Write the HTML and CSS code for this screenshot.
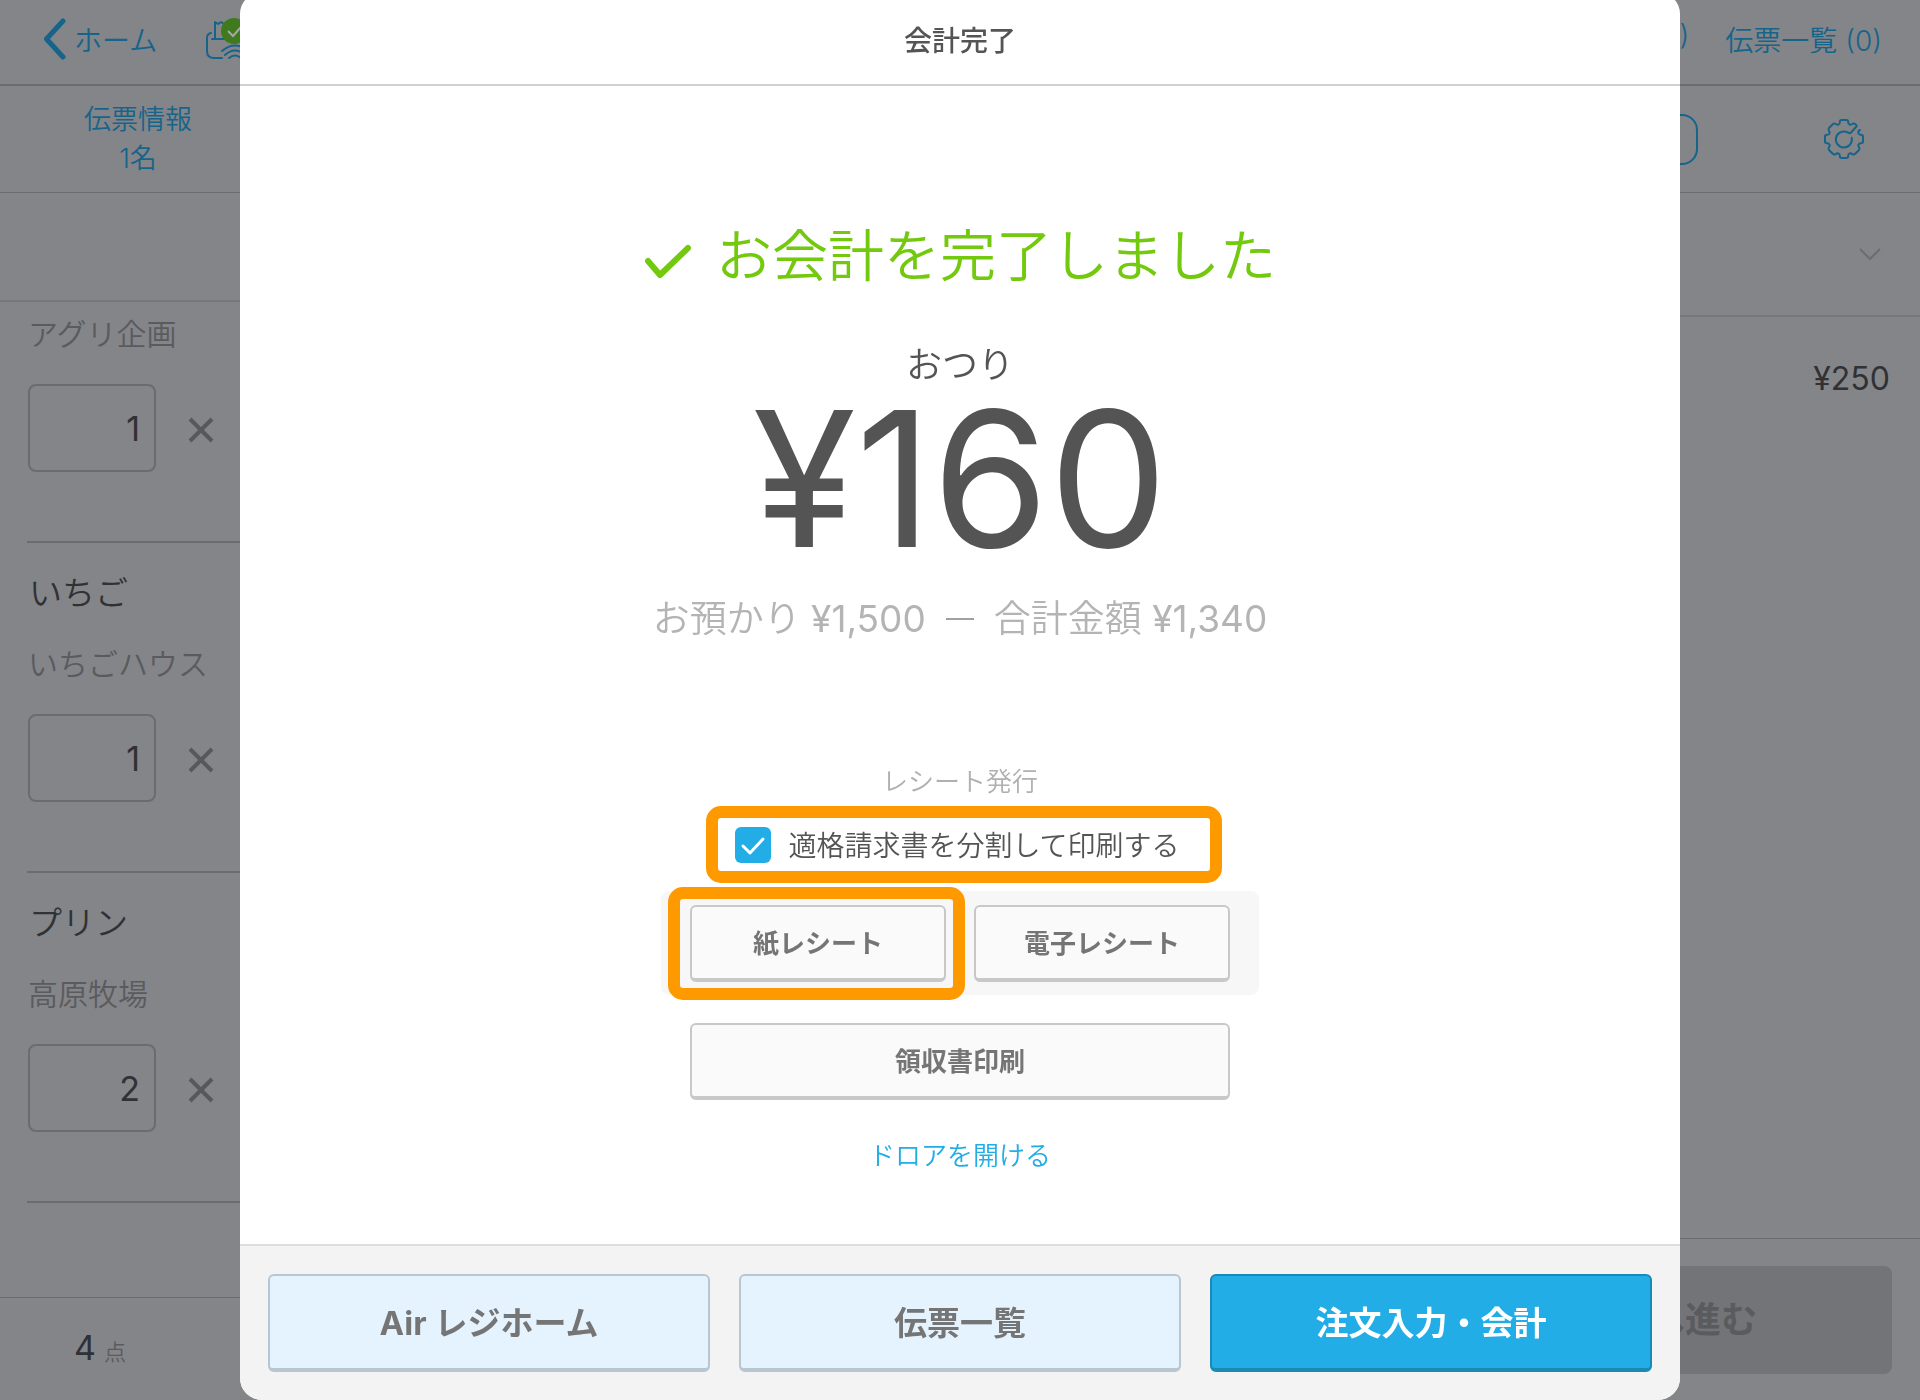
FILE: index.html
```html
<!DOCTYPE html>
<html lang="ja">
<head>
<meta charset="utf-8">
<meta name="viewport" content="width=device-width, initial-scale=1">
<title>会計完了</title>
<link rel="stylesheet" href="styles.css">
</head>
<body>
<div class="app">
  <header class="topbar">
    <a class="back" href="#">
      <svg width="24" height="42" viewBox="0 0 24 42" aria-hidden="true"><path d="M20 3 3.500 21 20 39" fill="none" stroke="currentColor" stroke-width="5" stroke-linecap="round" stroke-linejoin="round"/></svg>
      <span>ホーム</span>
    </a>
    <svg class="printer" width="56" height="44" viewBox="0 0 56 44" aria-hidden="true">
      <g fill="none" stroke="currentColor" stroke-width="2" stroke-linecap="round" stroke-linejoin="round">
        <path d="M10 22V5l3 2 3-2 3 2 3-2 3 2 3-2 3 2 3-2v17M7 22h34"/>
        <path d="M6 16Q2 17 2 21v13q0 7 7 7h8M42 16q7 1 7 6v12q0 7-5 7"/>
        <path d="M17 34q13-11 26 0M20 38q10-9 20 0M24 41q6-5 12 0"/>
      </g>
      <circle cx="29" cy="14" r="13" fill="#3f7b1e"/>
      <path d="m23 14 5 5 8-9" fill="none" stroke="#a5a8a5" stroke-width="2"/>
    </svg>
    <nav class="topbar-links">
      <a href="#">(0)</a>
      <a href="#">伝票一覧 (0)</a>
    </nav>
  </header>
  <div class="toolbar">
    <a class="slip-info" href="#"><span>伝票情報</span><span>1名</span></a>
    <div class="toolbar-actions">
      <button class="outline-button" type="button" aria-label="検索"></button>
      <button class="icon-button" type="button" aria-label="設定">
        <svg width="40" height="40" viewBox="0 0 40 40" aria-hidden="true">
          <g fill="none" stroke="currentColor" stroke-width="2" stroke-linecap="round" stroke-linejoin="round">
            <path d="M36 11Q33.500 12 34.500 14.500Q35 15.800 36.800 15.800Q39 15.800 39 17.500V22.500Q39 24.200 36.800 24.200Q35 24.200 34.500 25.500Q33.800 27 35.100 28.300Q36 30 34.800 31.200L31.200 34.800Q30 36 28.300 35.100Q27 33.800 25.500 34.500Q24.200 35 24.200 36.800Q24.200 39 22.500 39H17.500Q15.800 39 15.800 36.800Q15.800 35 14.500 34.500Q13 33.800 11.700 35.100Q10 36 8.800 34.800L5.200 31.200Q4 30 4.900 28.300Q6.200 27 5.500 25.500Q5 24.200 3.200 24.200Q1 24.200 1 22.500V17.500Q1 15.800 3.200 15.800Q5 15.800 5.500 14.500Q6.200 13 4.900 11.700Q4 10 5.200 8.800L8.800 5.200Q10 4 11.700 4.900Q13 6.200 14.500 5.500Q15.800 5 15.800 3.200Q15.800 1 17.500 1H22.500Q24.200 1 24.200 3.200Q24.200 5 25.500 5.500Q27 6.200 28.300 4.900Q30 4 31.500 5.300Q33.500 6.500 32 8L27 13.500Q25.800 14.800 24 13.600A8 8 0 1 0 27.700 18.800"/>
          </g>
        </svg>
      </button>
    </div>
  </div>
  <main class="workspace">
    <section class="order">
      <div class="order-head"></div>
      <ul class="items">
        <li class="item item-first">
          <span class="maker">アグリ企画</span>
          <span class="qty"><input type="text" value="1" aria-label="アグリ企画の数量"><svg width="26" height="26" viewBox="0 0 26 26" aria-hidden="true"><path d="m2 2 22 22M24 2 2 24" stroke="currentColor" stroke-width="4"/></svg></span>
        </li>
        <li class="item">
          <span class="name">いちご</span>
          <span class="maker">いちごハウス</span>
          <span class="qty"><input type="text" value="1" aria-label="いちごの数量"><svg width="26" height="26" viewBox="0 0 26 26" aria-hidden="true"><path d="m2 2 22 22M24 2 2 24" stroke="currentColor" stroke-width="4"/></svg></span>
        </li>
        <li class="item">
          <span class="name">プリン</span>
          <span class="maker">高原牧場</span>
          <span class="qty"><input type="text" value="2" aria-label="プリンの数量"><svg width="26" height="26" viewBox="0 0 26 26" aria-hidden="true"><path d="m2 2 22 22M24 2 2 24" stroke="currentColor" stroke-width="4"/></svg></span>
        </li>
      </ul>
      <div class="order-total"><span class="count">4</span><span class="unit">点</span></div>
    </section>
    <section class="bill">
      <div class="bill-head">
        <svg width="24" height="14" viewBox="0 0 24 14" aria-hidden="true"><path d="m2 2 10 10L22 2" fill="none" stroke="currentColor" stroke-width="2"/></svg>
      </div>
      <p class="bill-price">¥250</p>
      <div class="bill-foot"><button class="proceed" type="button" disabled>お会計へ進む</button></div>
    </section>
  </main>
</div>

<div class="overlay">
  <section class="modal" role="dialog" aria-modal="true" aria-labelledby="modal-title">
    <header class="modal-head"><h1 id="modal-title">会計完了</h1></header>
    <div class="modal-body">
      <h2 class="done">
        <svg width="48" height="36" viewBox="0 0 48 36" aria-hidden="true"><path d="m4 17 12 14L44 4" fill="none" stroke="currentColor" stroke-width="6" stroke-linecap="round" stroke-linejoin="round"/></svg>
        <span>お会計を完了しました</span>
      </h2>
      <p class="change-label">おつり</p>
      <p class="change">¥160</p>
      <p class="breakdown"><span>お預かり <span class="amount">¥1,500</span></span><span class="minus"></span><span>合計金額 <span class="amount">¥1,340</span></span></p>
      <p class="receipt-label">レシート発行</p>
      <label class="split"><input type="checkbox" checked><span>適格請求書を分割して印刷する</span></label>
      <div class="receipt-types">
        <button class="button button-marked" type="button">紙レシート</button>
        <button class="button" type="button">電子レシート</button>
      </div>
      <button class="button button-wide" type="button">領収書印刷</button>
      <a class="drawer" href="#">ドロアを開ける</a>
    </div>
    <footer class="modal-foot">
      <button class="nav-button" type="button">Air レジホーム</button>
      <button class="nav-button" type="button">伝票一覧</button>
      <button class="nav-button nav-primary" type="button">注文入力・会計</button>
    </footer>
  </section>
</div>
</body>
</html>
```
FILE: styles.css
```css
* {
  box-sizing: border-box;
}

body {
  margin: 0;
  background: #848589;
  color: #303134;
  font-family: Inter, "Noto Sans CJK JP", sans-serif;
  font-weight: 350;
  overflow: hidden;
}

h1, h2, p, ul {
  margin: 0;
  padding: 0;
}

a {
  color: inherit;
  text-decoration: none;
}

button, input {
  font: inherit;
  color: inherit;
}

svg {
  display: block;
  flex: none;
}

/* Register screen behind the dialog */
.app {
  display: flex;
  flex-direction: column;
  height: 100vh;
}

.topbar {
  display: flex;
  align-items: center;
  height: 86px;
  padding: 0 38px 6px 43px;
  border-bottom: 2px solid #6b6c70;
  color: #16648a;
  font-size: 28px;
}

.back {
  display: flex;
  align-items: center;
  gap: 7px;
}

.printer {
  margin-left: 48px;
}

.topbar-links {
  display: flex;
  gap: 36px;
  margin-left: auto;
}

.toolbar {
  display: flex;
  align-items: center;
  justify-content: space-between;
  height: 107px;
  padding: 0 56px 0 84px;
  border-bottom: 1px solid #6b6c70;
  color: #16648a;
}

.slip-info {
  display: flex;
  flex-direction: column;
  align-items: center;
  font-size: 27px;
  line-height: 39px;
}

.toolbar-actions {
  display: flex;
  align-items: center;
  gap: 126px;
}

.outline-button {
  width: 160px;
  height: 51px;
  border: 2px solid #16648a;
  border-radius: 16px;
  background: none;
}

.icon-button {
  padding: 0;
  border: 0;
  background: none;
}

.workspace {
  display: grid;
  grid-template-columns: 1fr 1fr;
  flex: 1;
  min-height: 0;
}

.order, .bill {
  display: flex;
  flex-direction: column;
}

.order-head {
  height: 109px;
  border-bottom: 2px solid #77787c;
}

.items {
  flex: 1;
  list-style: none;
}

.item {
  display: flex;
  flex-direction: column;
  margin-left: 27px;
  padding: 26px 0 69px 1px;
  border-bottom: 2px solid #6b6c70;
}

.item-first {
  padding-top: 12px;
}

.name {
  margin-bottom: 27px;
  padding-left: 1px;
  font-size: 33px;
  line-height: 48px;
}

.maker {
  margin-bottom: 30px;
  color: #5a5b5e;
  font-size: 30px;
  line-height: 40px;
}

.qty {
  display: flex;
  align-items: center;
  gap: 32px;
  color: #57585b;
}

.qty svg {
  margin-top: 4px;
}

.qty input {
  width: 128px;
  height: 88px;
  padding: 0 14px;
  border: 2px solid #6b6c70;
  border-radius: 8px;
  background: none;
  color: #303134;
  font-size: 34px;
  font-weight: 400;
  text-align: right;
}

.order-total {
  display: flex;
  align-items: baseline;
  gap: 8px;
  height: 103px;
  padding: 29px 0 0 74px;
  border-top: 1px solid #6b6c70;
}

.count {
  font-size: 34px;
  font-weight: 400;
}

.unit {
  color: #5a5b5e;
  font-size: 22px;
}

.bill-head {
  display: flex;
  align-items: center;
  justify-content: flex-end;
  height: 124px;
  padding-right: 38px;
  border-bottom: 2px solid #77787c;
  color: #6b6c70;
}

.bill-price {
  flex: 1;
  padding: 39px 30px 0 0;
  font-size: 32px;
  font-weight: 400;
  line-height: 46px;
  text-align: right;
}

.bill-foot {
  display: flex;
  justify-content: flex-end;
  padding: 27px 28px 26px;
  border-top: 1px solid #6b6c70;
}

.proceed {
  width: 486px;
  height: 108px;
  padding: 0 0 6px;
  border: 0;
  border-radius: 8px;
  background: #737478;
  color: #5a5b5e;
  font-size: 36px;
  font-weight: 700;
}

/* Dialog */
.overlay {
  position: fixed;
  inset: -8px 0 0;
  display: flex;
  justify-content: center;
}

.modal {
  display: flex;
  flex-direction: column;
  width: 75%;
  overflow: hidden;
  border-radius: 22px;
  background: #fff;
  color: #545454;
}

.modal-head {
  height: 94px;
  padding-top: 29px;
  border-bottom: 2px solid #d0d0d0;
  text-align: center;
}

.modal-head h1 {
  font-size: 28px;
  font-weight: 500;
  line-height: 40px;
}

.modal-body {
  display: flex;
  flex-direction: column;
  align-items: center;
  flex: 1;
  padding-top: 130px;
}

.done {
  display: flex;
  align-items: center;
  gap: 24px;
  color: #73c90d;
  font-size: 56px;
  font-weight: 350;
  line-height: 80px;
}

.done svg {
  margin-top: 12px;
}

.change-label {
  margin-top: 45px;
  font-size: 36px;
  line-height: 48px;
}

.change {
  margin-top: 10px;
  font-size: 188px;
  font-weight: 400;
  line-height: 160px;
}

.breakdown {
  display: flex;
  align-items: center;
  gap: 20px;
  margin-top: 36px;
  color: #b4b4b4;
  font-size: 37px;
  line-height: 48px;
}

.amount {
  font-weight: 400;
}

.minus {
  width: 28px;
  height: 2px;
  background: #a0a0a0;
}

.receipt-label {
  margin-top: 119px;
  color: #b0b0b0;
  font-size: 26px;
  line-height: 40px;
}

.split {
  display: flex;
  align-items: center;
  gap: 17px;
  height: 77px;
  margin: 4px 0 8px 8px;
  padding: 0 30px 0 17px;
  border: 12px solid #ff9900;
  border-radius: 15px;
  font-size: 28px;
}

.split span {
  padding-bottom: 2px;
}

.split input {
  width: 36px;
  height: 36px;
  margin: 0;
  border-radius: 6px;
  appearance: none;
  background: #22ade6 url("data:image/svg+xml,%3Csvg xmlns='http://www.w3.org/2000/svg' viewBox='0 0 36 36'%3E%3Cpath d='m8 19 7 7 13-14' fill='none' stroke='white' stroke-width='3' stroke-linecap='round' stroke-linejoin='round'/%3E%3C/svg%3E");
}

.receipt-types {
  display: flex;
  justify-content: center;
  gap: 28px;
  width: 598px;
  padding: 14px 0 13px;
  border-radius: 8px;
  background: #f7f7f7;
}

.button {
  position: relative;
  width: 256px;
  height: 77px;
  padding: 0 0 2px;
  border: 2px solid #c8c8c8;
  border-bottom-width: 4px;
  border-radius: 6px;
  background: #fafafa;
  color: #757575;
  font-size: 26px;
  font-weight: 700;
}

.button-marked::after {
  content: "";
  position: absolute;
  inset: -20px -21px -22px -24px;
  border: 12px solid #ff9900;
  border-radius: 15px;
}

.button-wide {
  width: 540px;
  margin-top: 28px;
}

.drawer {
  margin-top: 36px;
  color: #22ade6;
  font-size: 26px;
  line-height: 40px;
}

.modal-foot {
  display: grid;
  grid-template-columns: repeat(3, 1fr);
  gap: 29px;
  padding: 28px;
  border-top: 2px solid #dedede;
  background: #f3f3f3;
}

.nav-button {
  height: 98px;
  padding: 0 0 3px;
  border: 2px solid #b8c6d0;
  border-bottom-width: 4px;
  border-radius: 6px;
  background: #e5f3ff;
  color: #757575;
  font-size: 33px;
  font-weight: 700;
}

.nav-primary {
  border-color: #1b89b6;
  background: #22ade6;
  color: #fff;
}
```
